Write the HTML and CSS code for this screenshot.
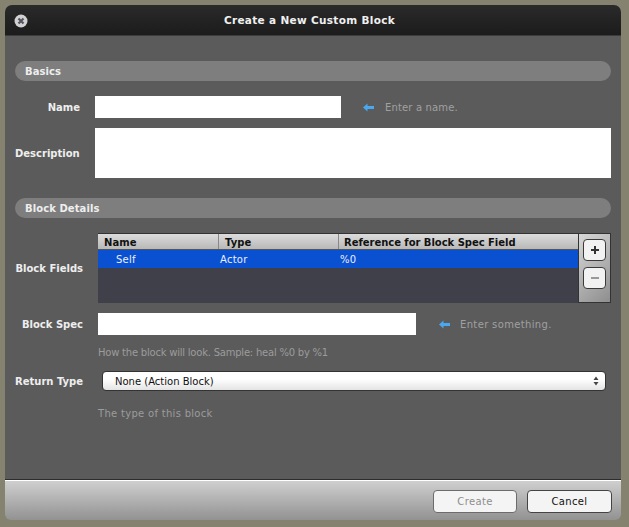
FILE: index.html
```html
<!DOCTYPE html>
<html lang="en">
<head>
<meta charset="utf-8">
<title>Create a New Custom Block</title>
<link rel="stylesheet" href="styles.css">
</head>
<body>
<div class="window">
  <header class="titlebar">
    <svg class="close" width="14" height="14" viewBox="0 0 14 14"><circle cx="7" cy="7" r="6.5" fill="#d2d2d2"/><path d="M4.5 4.5l5 5M9.500 4.500l-5 5" stroke="#555560" stroke-width="2.200"/></svg>
    <h1>Create a New Custom Block</h1>
  </header>
  <main class="body">
    <div class="section">Basics</div>
    <div class="row row-name">
      <label class="label label-a">Name</label>
      <div class="input input-name"></div>
      <svg class="arrow" width="11" height="9" viewBox="0 0 11 9"><path d="M0 4.500L4.500 0.500V3H11V6H4.500V8.500Z" fill="#4aa8f0"/></svg>
      <span class="note note-name">Enter a name.</span>
    </div>
    <div class="row row-desc">
      <label class="label label-a label-left">Description</label>
      <div class="input input-desc"></div>
    </div>
    <div class="section section-2">Block Details</div>
    <div class="row row-fields">
      <label class="label label-b">Block Fields</label>
      <div class="table">
        <div class="thead">
          <div class="th th-name">Name</div>
          <div class="th th-type">Type</div>
          <div class="th th-ref">Reference for Block Spec Field</div>
        </div>
        <div class="tr">
          <div class="td td-name">Self</div>
          <div class="td td-type">Actor</div>
          <div class="td">%0</div>
        </div>
      </div>
      <div class="side">
        <div class="sq plus"><svg width="10" height="10" viewBox="0 0 10 10"><path d="M1 5H9M5 1V9" stroke="#333" stroke-width="2"/></svg></div>
        <div class="sq minus"><svg width="10" height="10" viewBox="0 0 10 10"><path d="M1 5H9" stroke="#999" stroke-width="2"/></svg></div>
      </div>
    </div>
    <div class="row row-spec">
      <label class="label label-b">Block Spec</label>
      <div class="input input-spec"></div>
      <svg class="arrow arrow-2" width="11" height="9" viewBox="0 0 11 9"><path d="M0 4.500L4.500 0.500V3H11V6H4.500V8.500Z" fill="#4aa8f0"/></svg>
      <span class="note">Enter something.</span>
    </div>
    <div class="hint hint-1">How the block will look. Sample: heal %0 by %1</div>
    <div class="row row-return">
      <label class="label label-b">Return Type</label>
      <div class="select">
        <span>None (Action Block)</span>
        <svg width="6" height="10" viewBox="0 0 6 10"><path d="M3 0.500L5.500 4H0.500ZM3 9.500L0.500 6H5.500Z" fill="#444"/></svg>
      </div>
    </div>
    <div class="hint hint-2">The type of this block</div>
  </main>
  <footer class="footer">
    <button class="btn btn-create" type="button">Create</button>
    <button class="btn btn-cancel" type="button">Cancel</button>
  </footer>
</div>
</body>
</html>
```
FILE: styles.css
```css
* { box-sizing: border-box; }
html, body { margin: 0; height: 100%; }
body {
  background: #85826f;
  padding: 5px 8px 0 5px;
  font-family: "DejaVu Sans", sans-serif;
  font-size: 10px;
  overflow: hidden;
}
.window {
  width: 616px;
  height: 515px;
  display: flex;
  flex-direction: column;
  border-radius: 7px 7px 6px 6px;
  overflow: hidden;
}
.titlebar {
  height: 31px;
  flex: none;
  display: flex;
  align-items: center;
  justify-content: center;
  position: relative;
  padding-right: 7px;
  background: linear-gradient(#2a2a2a, #1c1c1c);
  border-bottom: 1px solid #3c3c3c;
}
.close { position: absolute; left: 9px; top: 9px; }
h1 {
  margin: 0;
  color: #f0f0f0;
  font-size: 10.500px;
  font-weight: bold;
  letter-spacing: 0.320px;
}
.body {
  flex: 1;
  background: #5b5b5b;
  padding: 25px 10px 0;
  color: #eee;
}
.section {
  height: 20px;
  border-radius: 10px;
  background: #7e7e7e;
  color: #eee;
  font-weight: bold;
  line-height: 21px;
  padding-left: 10px;
  letter-spacing: 0.080px;
}
.section-2 { margin-top: 20px; }
.row { display: flex; align-items: center; }
.row-name { margin-top: 15px; height: 22px; }
.row-desc { margin-top: 10px; height: 50px; }
.row-fields { margin-top: 15px; height: 70px; }
.row-spec { margin-top: 10px; height: 22px; }
.row-return { margin-top: 12px; height: 20px; }
.label {
  flex: none;
  font-weight: bold;
  text-align: right;
  color: #eee;
}
.label-a { width: 80px; padding-right: 15px; }
.label-left { text-align: left; }
.label-b { width: 83px; padding-right: 15px; }
.input { background: #fff; height: 100%; flex: none; }
.input-name { width: 246px; }
.input-desc { width: 516px; }
.input-spec { width: 318px; }
.arrow { margin-left: 22px; flex: none; }
.arrow-2 { margin-left: 23px; }
.note {
  margin-left: 10px;
  color: #a0a0a0;
  letter-spacing: 0.350px;
}
.note-name { margin-left: 11px; letter-spacing: 0.150px; }
.table {
  width: 480px;
  height: 70px;
  background: #40404a;
  border-top: 1px solid #333;
  flex: none;
}
.thead {
  display: flex;
  height: 16px;
  background: linear-gradient(#dcdcdc, #b8b8b8);
  border-bottom: 1px solid #555;
  color: #111;
  font-weight: bold;
  line-height: 17px;
}
.th { padding-left: 6px; border-right: 1px solid #888; letter-spacing: 0.100px; }
.th-name { width: 121px; }
.th-type { width: 120px; }
.th-ref { flex: 1; border-right: 0; padding-left: 5px; letter-spacing: -0.030px; }
.tr {
  display: flex;
  height: 18px;
  background: #0951d0;
  color: #eef;
  line-height: 19px;
  letter-spacing: 0.250px;
}
.td-name { width: 122px; padding-left: 18px; }
.td-type { width: 120px; }
.side {
  width: 33px;
  height: 70px;
  flex: none;
  border: 1px solid #333;
  background: linear-gradient(135deg, #d8d8d8, #8e8e8e);
  padding: 5px 4px;
  display: flex;
  flex-direction: column;
  gap: 6px;
}
.sq {
  width: 23px;
  height: 22px;
  border: 1px solid #3a3a3a;
  border-radius: 4px;
  background: #f2f2f2;
  display: flex;
  align-items: center;
  justify-content: center;
}
.hint {
  margin-left: 83px;
  color: #9c9c9c;
  letter-spacing: 0.300px;
  line-height: 12px;
}
.hint-1 { margin-top: 12px; letter-spacing: -0.220px; }
.hint-2 { margin-top: 17px; }
.select {
  margin-left: 4px;
  width: 504px;
  height: 20px;
  flex: none;
  border: 1px solid #333;
  border-radius: 4px;
  background: linear-gradient(#fff 40%, #e4e4e4);
  color: #111;
  display: flex;
  align-items: center;
  justify-content: space-between;
  padding: 0 6px 0 12px;
}
.footer {
  height: 40px;
  flex: none;
  background: linear-gradient(#cfcfcf, #929292);
  border-top: 1px solid #fff;
  box-shadow: 0 -1px 0 #2d2d2d;
  display: flex;
  justify-content: flex-end;
  gap: 10px;
  padding: 9px 9px 0 0;
}
.btn {
  width: 84px;
  height: 23px;
  border: 1px solid #444;
  border-radius: 4px;
  background: #f4f4f4;
  font: 10px "DejaVu Sans", sans-serif;
  letter-spacing: 0.350px;
  padding: 0;
}
.btn-create { color: #8e8e8e; border-color: #6c6c6c; }
.btn-cancel { color: #111; width: 85px; }
```
